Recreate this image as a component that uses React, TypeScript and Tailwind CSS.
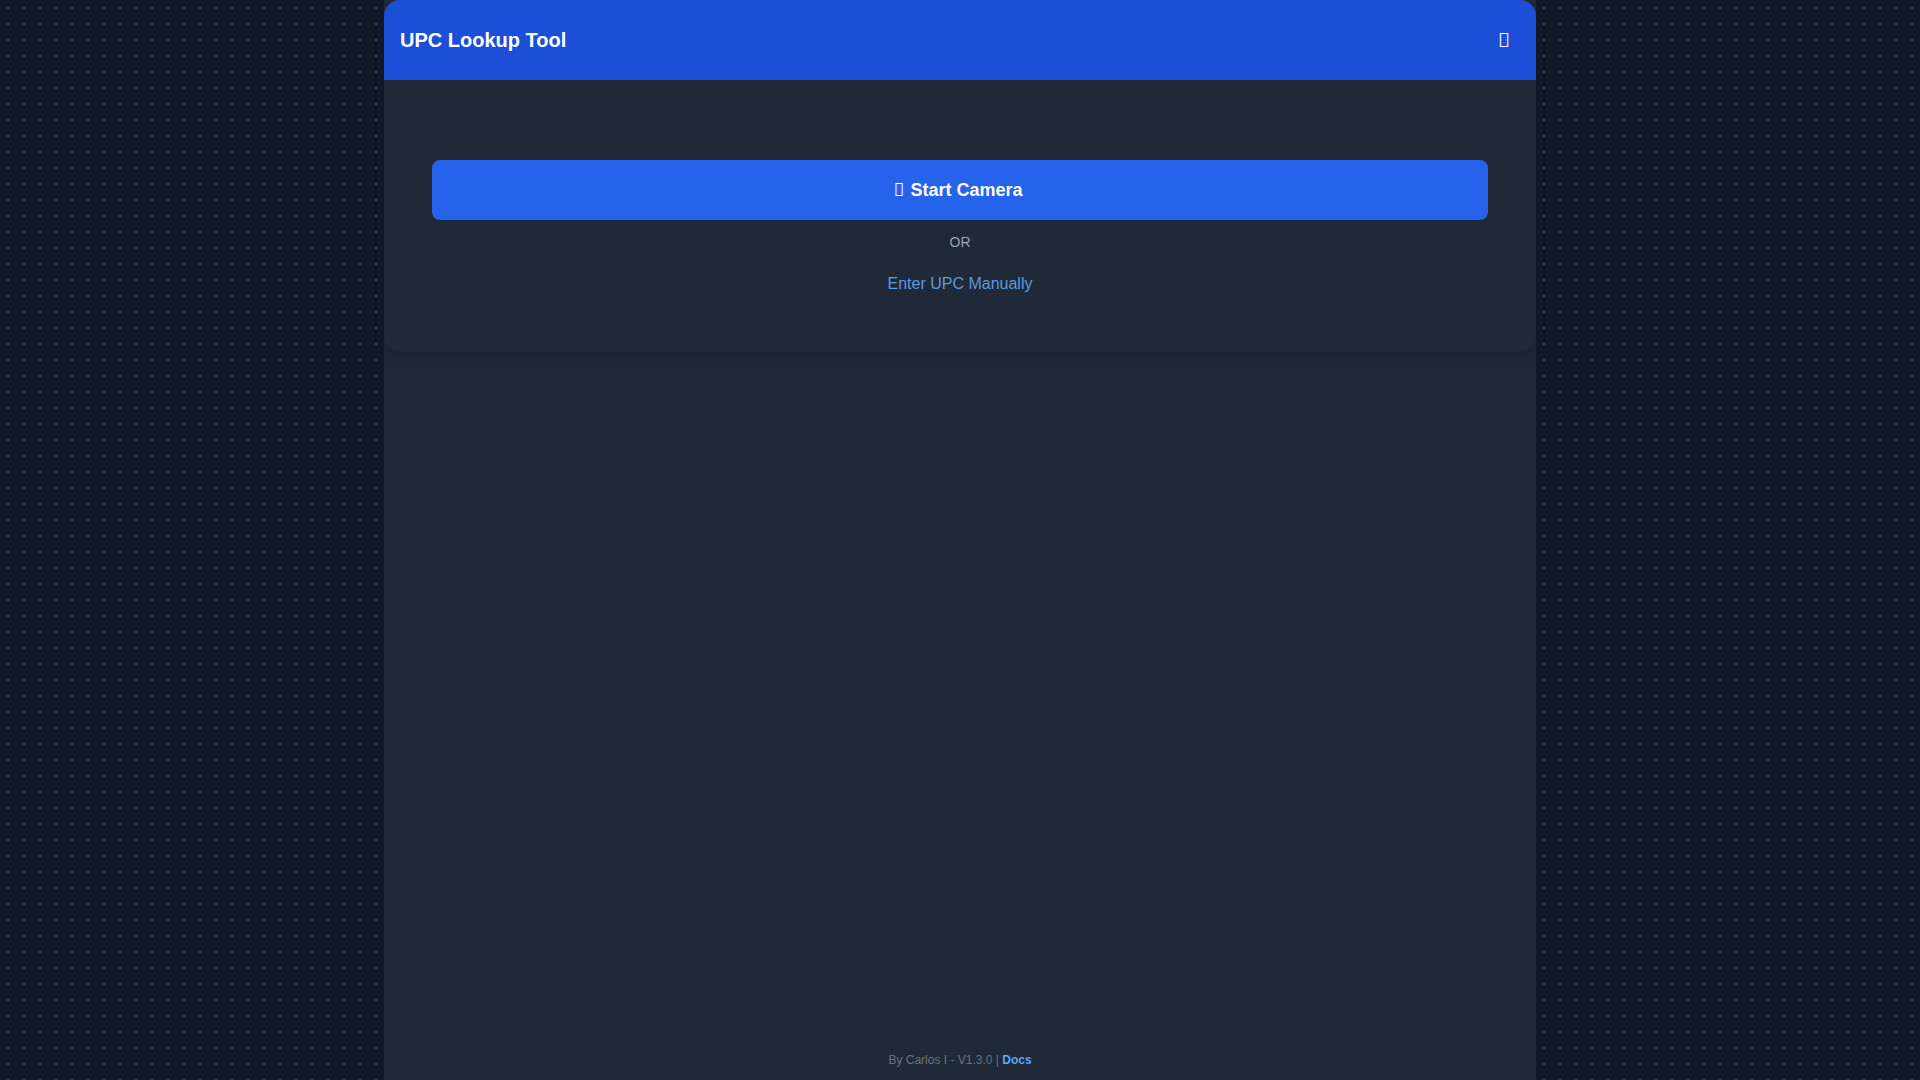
export default function App() {
  return (
    <div className="min-h-screen bg-[#111827] bg-[radial-gradient(#374151_1px,transparent_1px)] bg-[size:16px_16px] font-['Liberation_Sans',Arial,sans-serif]">
      <div className="mx-auto flex h-screen w-[1152px] flex-col bg-[#1f2937]">
        <div className="rounded-2xl bg-[#1f2937] shadow-lg">
          <header className="flex h-20 items-center justify-between rounded-t-2xl bg-[#1d4ed8] px-4">
            <h1 className="text-xl font-bold text-white">UPC Lookup Tool</h1>
            <button className="py-2 pr-2.5 pl-3 text-xl text-white">
              <i className="font-['Noto_Sans',sans-serif] not-italic">{"\uf013"}</i>
            </button>
          </header>
          <div className="flex flex-col items-center px-12 pt-20 pb-12">
            <button className="h-[60px] w-full rounded-lg bg-[#2563eb] pr-1 text-lg font-bold text-white">
              <i className="mr-1.5 font-['Noto_Sans',sans-serif] leading-none font-normal not-italic">{"\uf030"}</i>
              Start Camera
            </button>
            <p className="mt-3 text-sm leading-5 text-[#9ca3af]">OR</p>
            <button className="mt-3 py-2 text-base leading-6 text-[#5b9bdf]">Enter UPC Manually</button>
          </div>
        </div>
        <footer className="mt-auto pb-3 text-center text-xs leading-4 text-[#6b7280]">
          By Carlos I - V1.3.0 | <a className="font-bold text-[#60a5fa]">Docs</a>
        </footer>
      </div>
    </div>
  );
}
